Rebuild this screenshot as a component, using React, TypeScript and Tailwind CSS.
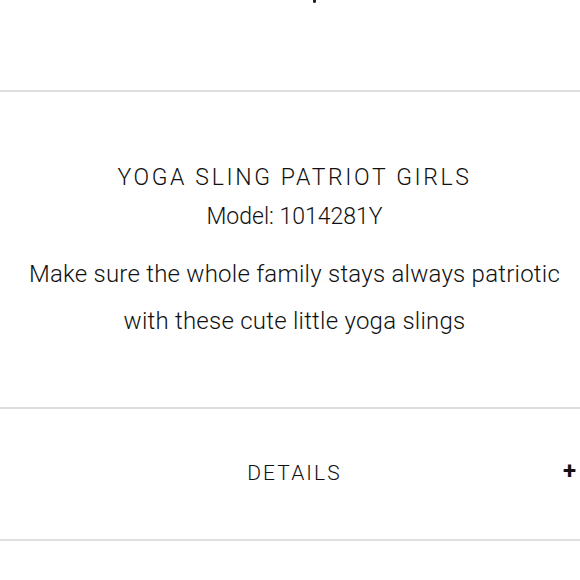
export default function App() {
  return (
    <div className="w-[580px] h-[580px] bg-white overflow-hidden text-[#111]" style={{ fontFamily: 'Roboto, "Liberation Sans", sans-serif' }}>
      <div className="h-[90px] relative">
        <div className="absolute left-[313px] top-0 w-[3px] h-[3px] rounded-b-full bg-[#222]" />
      </div>
      <div className="border-t-2 border-[#dedede] h-[317px] flex flex-col items-center pt-[72px] pl-[9px]">
        <h1 className="text-[23px] leading-[28px] tracking-[0.115em] font-light whitespace-nowrap">YOGA SLING PATRIOT GIRLS</h1>
        <p className="text-[23px] leading-[28px] mt-[11px] font-light">Model: 1014281Y</p>
        <p className="text-[24px] leading-[47px] mt-[20px] text-center font-light tracking-[0.01em] whitespace-nowrap">
          Make sure the whole family stays always patriotic
          <br />
          with these cute little yoga slings
        </p>
      </div>
      <div className="border-t-2 border-[#dedede] h-[132px] flex items-center justify-center relative pl-[9px]">
        <span className="text-[21px] tracking-[0.1em] font-light">DETAILS</span>
        <span className="absolute right-[4px] top-[50px] text-[24px] font-bold leading-none">+</span>
      </div>
      <div className="border-t-2 border-[#dedede]" />
    </div>
  );
}
